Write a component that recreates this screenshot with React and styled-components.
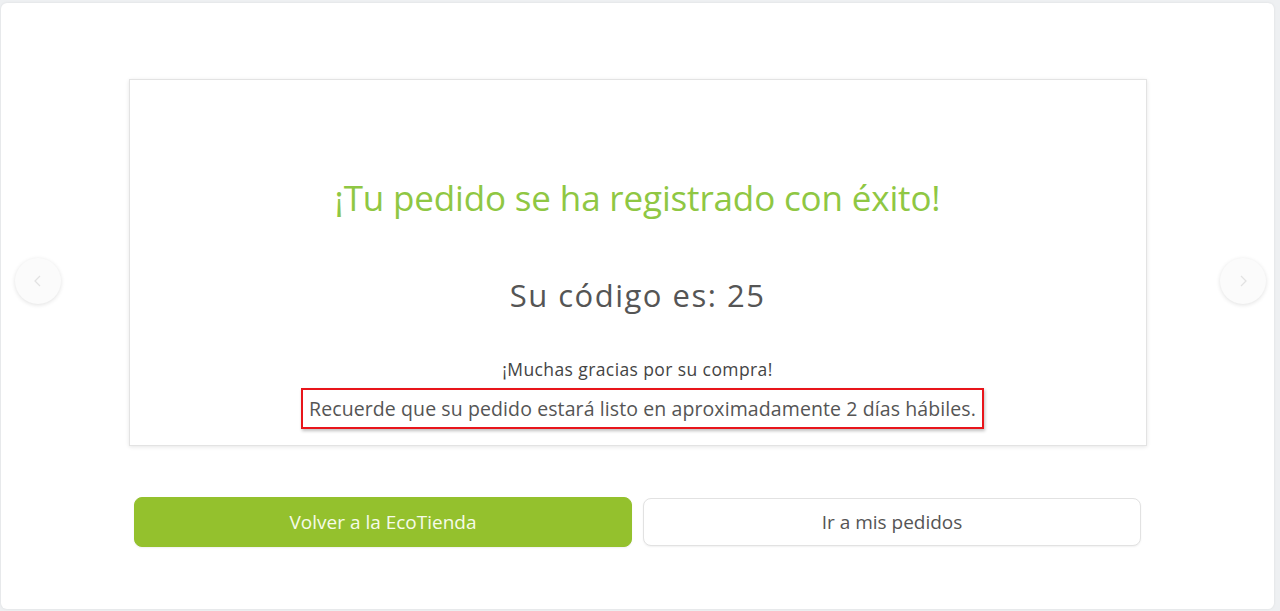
import React from "react";
import styled, { createGlobalStyle } from "styled-components";

const GlobalStyle = createGlobalStyle`
  html, body {
    margin: 0;
    padding: 0;
    background: #eef0f2;
    font-family: "Open Sans", "Noto Sans", sans-serif;
  }
`;

const Page = styled.div`
  height: 611px;
  padding: 3px 6px 2px 1px;
  box-sizing: border-box;
`;

const Panel = styled.div`
  position: relative;
  height: 100%;
  background: #fff;
  border-radius: 6px;
  box-shadow: 0 0 3px rgba(0, 0, 0, 0.08);
  display: flex;
  flex-direction: column;
  align-items: center;
  padding-top: 76px;
  box-sizing: border-box;
`;

const Card = styled.div`
  width: 1018px;
  height: 367px;
  box-sizing: border-box;
  border: 1px solid #e3e3e3;
  box-shadow: 0 1px 4px rgba(0, 0, 0, 0.1);
  display: flex;
  flex-direction: column;
  align-items: center;
  padding-top: 96px;
`;

const Title = styled.h1`
  margin: 0;
  font-family: "Open Sans", sans-serif;
  font-weight: 400;
  font-size: 35px;
  line-height: 44px;
  color: #8fc743;
  letter-spacing: -0.15px;
`;

const Code = styled.h2`
  margin: 56px 0 0;
  font-family: "Open Sans", sans-serif;
  font-weight: 400;
  font-size: 31px;
  line-height: 38px;
  color: #555;
  letter-spacing: 1.5px;
`;

const Thanks = styled.p`
  margin: 43px 0 0;
  font-size: 17.5px;
  line-height: 24px;
  color: #444;
  letter-spacing: 0.4px;
`;

const Notice = styled.p`
  margin: 7px 0 0 10px;
  padding: 0 6px;
  font-size: 19.5px;
  line-height: 37px;
  color: #555;
  border: 2px solid #e8151b;
  box-shadow: 1px 2px 3px rgba(0, 0, 0, 0.25);
  letter-spacing: 0.1px;
`;

const Actions = styled.div`
  margin-top: 51px;
  display: flex;
  gap: 11px;
  width: 1007px;
`;

const Button = styled.button`
  flex: 1;
  height: ${(p) => (p.$primary ? "50px" : "48px")};
  margin-top: ${(p) => (p.$primary ? "0" : "1px")};
  border-radius: 8px;
  border: 1px solid ${(p) => (p.$primary ? "#94c12d" : "#e2e2e2")};
  background: ${(p) => (p.$primary ? "#94c12d" : "#fff")};
  color: ${(p) => (p.$primary ? "#f6fbe9" : "#555")};
  font-family: "Open Sans", sans-serif;
  font-size: 19px;
  cursor: pointer;
  box-shadow: 0 1px 2px rgba(0, 0, 0, 0.06);
`;

const Arrow = styled.button`
  position: absolute;
  top: 255px;
  ${(p) => (p.$side === "left" ? "left: 14px;" : "right: 8px;")}
  width: 46px;
  height: 46px;
  border-radius: 50%;
  border: none;
  background: #fbfbfb;
  box-shadow: 0 1px 4px rgba(0, 0, 0, 0.12);
  display: flex;
  align-items: center;
  justify-content: center;
  padding: 0;
`;

const Chevron = ({ dir }) => (
  <svg width="14" height="14" viewBox="0 0 14 14">
    <path
      d={dir === "left" ? "M9 2 L4 7 L9 12" : "M5 2 L10 7 L5 12"}
      fill="none"
      stroke="#e2e2e2"
      strokeWidth="1.3"
    />
  </svg>
);

export default function App() {
  return (
    <>
      <GlobalStyle />
      <Page>
        <Panel>
          <Arrow $side="left">
            <Chevron dir="left" />
          </Arrow>
          <Card>
            <Title>¡Tu pedido se ha registrado con éxito!</Title>
            <Code>Su código es: 25</Code>
            <Thanks>¡Muchas gracias por su compra!</Thanks>
            <Notice>
              Recuerde que su pedido estará listo en aproximadamente 2 días hábiles.
            </Notice>
          </Card>
          <Actions>
            <Button $primary>Volver a la EcoTienda</Button>
            <Button>Ir a mis pedidos</Button>
          </Actions>
          <Arrow $side="right">
            <Chevron dir="right" />
          </Arrow>
        </Panel>
      </Page>
    </>
  );
}
